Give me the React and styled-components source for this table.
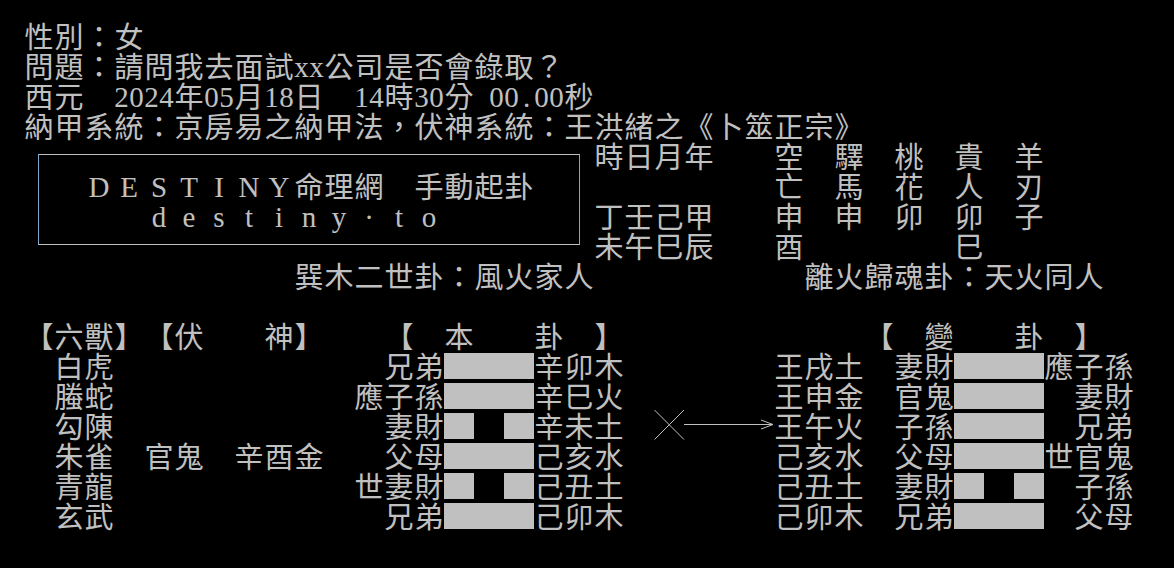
import React from "react";
import styled, { createGlobalStyle } from "styled-components";

const GlobalStyle = createGlobalStyle`
  html, body {
    margin: 0;
    padding: 0;
    background: #000;
  }
`;

const Screen = styled.div`
  width: 1174px;
  height: 568px;
  box-sizing: border-box;
  padding: 22px 0 0 24px;
  background: #000;
  color: #c0c0c0;
  font-family: "Liberation Serif", "Noto Sans CJK TC", serif;
  font-size: 29px;
  overflow: hidden;
`;

const Row = styled.div`
  display: flex;
  height: 30px;
  white-space: pre;
`;

const Cell = styled.span`
  flex: none;
  display: block;
  width: ${(p) => (p.$wide ? 30 : 15)}px;
  height: 30px;
  line-height: ${(p) => (p.$cjk ? 27 : 30)}px;
  text-align: center;
  font-family: ${(p) =>
    p.$cjk ? '"Noto Sans CJK TC", sans-serif' : '"Liberation Serif", serif'};
`;

const Split = styled.div`
  display: flex;
`;

const Panel = styled.div`
  width: 570px;
  height: 120px;
  flex: none;
`;

const Frame = styled.div`
  margin: 12px 0 0 14px;
  width: 542px;
  height: 91px;
  box-sizing: border-box;
  border-top: 1px solid #c0c0c0;
  border-bottom: 1px solid #c0c0c0;
  border-left: 1px solid #7fa8cf;
  border-right: 1px solid #7fa8cf;
  padding: 17px 0 0 45px;
`;

const Column = styled.div`
  display: flex;
  flex-direction: column;
`;

const Yao = styled.div`
  flex: none;
  display: flex;
  width: 90px;
  height: 30px;
  box-sizing: border-box;
  padding-top: 1px;
`;

const Seg = styled.div`
  width: 30px;
  height: 26px;
  background: ${(p) => (p.$on ? "#c0c0c0" : "transparent")};
`;

const ArrowBox = styled.svg`
  flex: none;
  width: 120px;
  height: 30px;
  overflow: visible;
`;

const isCjk = (ch) => ch.codePointAt(0) > 0x2e80;

const Text = ({ s, wide }) =>
  [...s].map((ch, i) => (
    <Cell key={i} $wide={wide || isCjk(ch)} $cjk={isCjk(ch)}>
      {ch}
    </Cell>
  ));

const Line = ({ children, wide }) => (
  <Row>{typeof children === "string" ? <Text s={children} wide={wide} /> : children}</Row>
);

const YaoLine = ({ yin }) => (
  <Yao>
    <Seg $on />
    <Seg $on={!yin} />
    <Seg $on />
  </Yao>
);

const Arrow = () => (
  <ArrowBox viewBox="0 0 120 30">
    <g stroke="#c0c0c0" strokeWidth="1" fill="none">
      <line x1="0.5" y1="-2" x2="30" y2="27.5" />
      <line x1="30" y1="-2" x2="0.5" y2="27.5" />
      <line x1="30" y1="12.5" x2="119" y2="12.5" />
      <polyline points="107,8 119,12.5 107,17" />
    </g>
  </ArrowBox>
);

const sp = (n) => "　".repeat(n);

const lines = [
  [`　白虎${sp(9)}兄弟`, "Y", `辛卯木${sp(5)}王戌土　妻財`, "Y", "應子孫"],
  [`　螣蛇${sp(8)}應子孫`, "Y", `辛巳火${sp(5)}王申金　官鬼`, "Y", "　妻財"],
  [`　勾陳${sp(9)}妻財`, "N", "辛未土　", "A", "王午火　子孫", "Y", "　兄弟"],
  [`　朱雀　官鬼　辛酉金${sp(2)}父母`, "Y", `己亥水${sp(5)}己亥水　父母`, "Y", "世官鬼"],
  [`　青龍${sp(8)}世妻財`, "N", `己丑土${sp(5)}己丑土　妻財`, "N", "　子孫"],
  [`　玄武${sp(9)}兄弟`, "Y", `己卯木${sp(5)}己卯木　兄弟`, "Y", "　父母"],
];

const renderPart = (part, i) => {
  if (part === "Y") return <YaoLine key={i} />;
  if (part === "N") return <YaoLine key={i} yin />;
  if (part === "A") return <Arrow key={i} />;
  return <Text key={i} s={part} />;
};

export default function App() {
  return (
    <>
      <GlobalStyle />
      <Screen>
        <Line>性別：女</Line>
        <Line>問題：請問我去面試xx公司是否會錄取？</Line>
        <Line>西元　2024年05月18日　14時30分 00.00秒</Line>
        <Line>納甲系統：京房易之納甲法，伏神系統：王洪緒之《卜筮正宗》</Line>
        <Split>
          <Panel>
            <Frame>
              <Line wide>DESTINY命理網　手動起卦</Line>
              <Line wide>　　destiny·to</Line>
            </Frame>
          </Panel>
          <Column>
            <Line>時日月年　　空　驛　桃　貴　羊</Line>
            <Line>{`${sp(6)}亡　馬　花　人　刃`}</Line>
            <Line>丁壬己甲　　申　申　卯　卯　子</Line>
            <Line>{`未午巳辰　　酉${sp(5)}巳`}</Line>
          </Column>
        </Split>
        <Line>{`${sp(9)}巽木二世卦：風火家人${sp(7)}離火歸魂卦：天火同人`}</Line>
        <Line> </Line>
        <Line>{`【六獸】【伏　　神】${sp(2)}【　本　　卦　】${sp(8)}【　變　　卦　】`}</Line>
        {lines.map((parts, r) => (
          <Row key={r}>{parts.map(renderPart)}</Row>
        ))}
      </Screen>
    </>
  );
}
